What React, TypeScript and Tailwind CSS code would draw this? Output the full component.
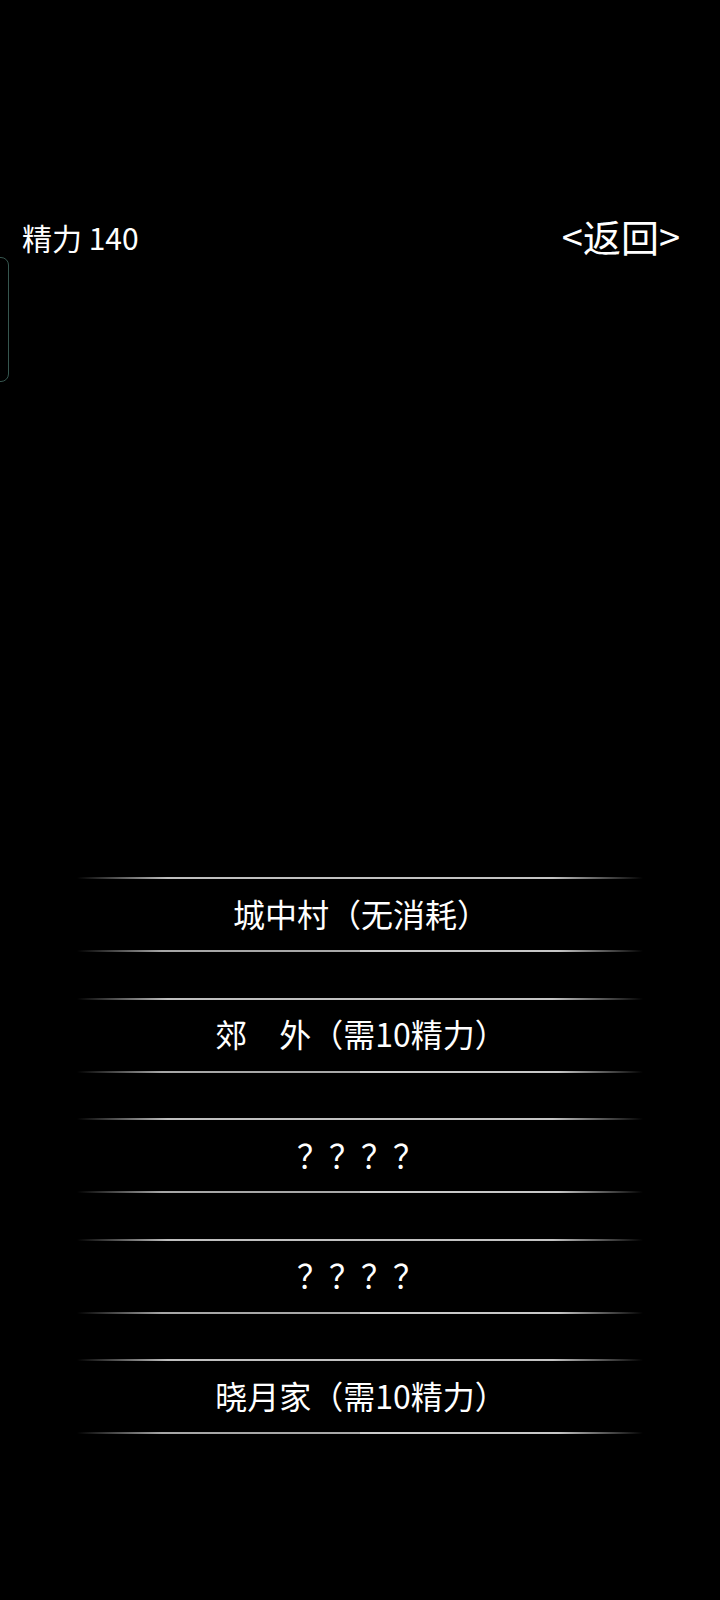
import React from "react";

const items = [
  "城中村（无消耗）",
  "郊　外（需10精力）",
  "？？？？",
  "？？？？",
  "晓月家（需10精力）",
];

function Option({ label }: { label: string }) {
  return (
    <div className="flex flex-col w-[566px] mx-auto">
      <div className="h-[2px] bg-[linear-gradient(to_right,transparent,#bfbfbf_16%,#c4c4c4_84%,transparent)]" />
      <div className="h-[71px] flex items-center justify-center pb-[4px]">
        <span className="text-[32px] leading-none text-white pl-[2px]">{label}</span>
      </div>
      <div className="h-[2px] flex">
        <div className="flex-1 bg-[linear-gradient(to_right,transparent,#a6a6a6_30%,#a8a8a8)]" />
        <div className="flex-1 bg-[linear-gradient(to_right,#cacaca,#c6c6c6_70%,transparent)]" />
      </div>
    </div>
  );
}

export default function App() {
  return (
    <div
      className="relative w-[720px] h-[1600px] bg-black overflow-hidden text-white"
      style={{ fontFamily: '"Noto Sans CJK SC", "Noto Sans", sans-serif' }}
    >
      <div className="flex justify-between items-start pt-[217px] pl-[22px] pr-[40px]">
        <span className="text-[30px] leading-none mt-[5px]">精力 140</span>
        <span className="text-[38px] leading-none">&lt;返回&gt;</span>
      </div>

      <div className="absolute left-[-14px] top-[257px] w-[23px] h-[125px] rounded-[8px] border-[1.5px] border-[#36564f]" />

      <div className="flex flex-col gap-[45.5px] mt-[622px]">
        {items.map((l, i) => (
          <Option key={i} label={l} />
        ))}
      </div>
    </div>
  );
}
